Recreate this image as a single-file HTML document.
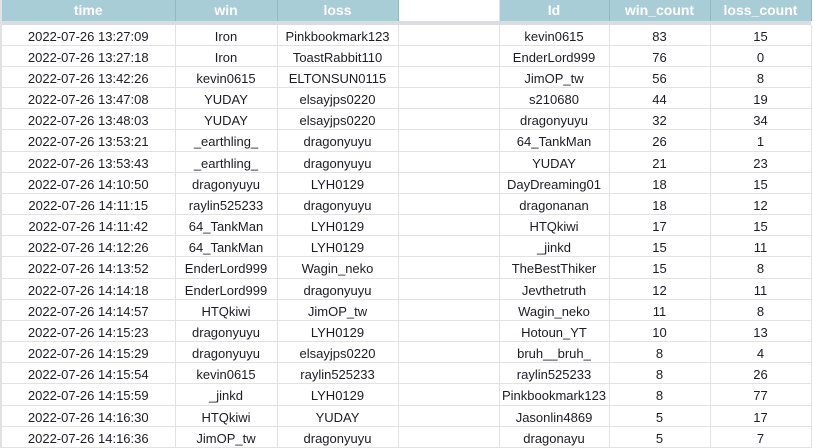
<!DOCTYPE html><html><head><style>
body{margin:0;width:814px;height:448px;overflow:hidden;background:#fff;font-family:"Liberation Sans",Arial,sans-serif}
table{border-collapse:collapse;position:absolute;left:2px;top:0;table-layout:fixed}
td,th{padding:0;text-align:center;white-space:nowrap;overflow:hidden}
th{height:20px;background:#a8cdd6;color:#fff;font-weight:bold;font-size:14px;border-right:1px solid #93b8c2;line-height:21px}
th.e{background:#fff;border-right:1px solid #e2e2e2}
tr.bar td{height:4px;background:#dadce0;border:none;padding:0;line-height:4px}
td{height:17px;padding-top:3px;border-right:1px solid #e2e2e2;border-bottom:1px solid #e2e2e2;font-size:13px;color:#1c1c24;line-height:17px}
tr.r td{height:18px;line-height:18px}
</style></head><body>
<div style="position:absolute;left:0;top:0;width:2px;height:448px;background:#e2e2e2"></div>
<table>
<colgroup><col style="width:173px"><col style="width:102px"><col style="width:121px"><col style="width:101px"><col style="width:110px"><col style="width:101px"><col style="width:101px"></colgroup>
<tr><th>time</th><th>win</th><th>loss</th><th class="e"></th><th>Id</th><th>win_count</th><th>loss_count</th></tr>
<tr class="bar"><td colspan="7"></td></tr>
<tr><td>2022-07-26 13:27:09</td><td>Iron</td><td>Pinkbookmark123</td><td></td><td>kevin0615</td><td>83</td><td>15</td></tr>
<tr><td>2022-07-26 13:27:18</td><td>Iron</td><td>ToastRabbit110</td><td></td><td>EnderLord999</td><td>76</td><td>0</td></tr>
<tr><td>2022-07-26 13:42:26</td><td>kevin0615</td><td>ELTONSUN0115</td><td></td><td>JimOP_tw</td><td>56</td><td>8</td></tr>
<tr><td>2022-07-26 13:47:08</td><td>YUDAY</td><td>elsayjps0220</td><td></td><td>s210680</td><td>44</td><td>19</td></tr>
<tr><td>2022-07-26 13:48:03</td><td>YUDAY</td><td>elsayjps0220</td><td></td><td>dragonyuyu</td><td>32</td><td>34</td></tr>
<tr class="r"><td>2022-07-26 13:53:21</td><td>_earthling_</td><td>dragonyuyu</td><td></td><td>64_TankMan</td><td>26</td><td>1</td></tr>
<tr><td>2022-07-26 13:53:43</td><td>_earthling_</td><td>dragonyuyu</td><td></td><td>YUDAY</td><td>21</td><td>23</td></tr>
<tr><td>2022-07-26 14:10:50</td><td>dragonyuyu</td><td>LYH0129</td><td></td><td>DayDreaming01</td><td>18</td><td>15</td></tr>
<tr><td>2022-07-26 14:11:15</td><td>raylin525233</td><td>dragonyuyu</td><td></td><td>dragonanan</td><td>18</td><td>12</td></tr>
<tr><td>2022-07-26 14:11:42</td><td>64_TankMan</td><td>LYH0129</td><td></td><td>HTQkiwi</td><td>17</td><td>15</td></tr>
<tr><td>2022-07-26 14:12:26</td><td>64_TankMan</td><td>LYH0129</td><td></td><td>_jinkd</td><td>15</td><td>11</td></tr>
<tr class="r"><td>2022-07-26 14:13:52</td><td>EnderLord999</td><td>Wagin_neko</td><td></td><td>TheBestThiker</td><td>15</td><td>8</td></tr>
<tr><td>2022-07-26 14:14:18</td><td>EnderLord999</td><td>dragonyuyu</td><td></td><td>Jevthetruth</td><td>12</td><td>11</td></tr>
<tr><td>2022-07-26 14:14:57</td><td>HTQkiwi</td><td>JimOP_tw</td><td></td><td>Wagin_neko</td><td>11</td><td>8</td></tr>
<tr><td>2022-07-26 14:15:23</td><td>dragonyuyu</td><td>LYH0129</td><td></td><td>Hotoun_YT</td><td>10</td><td>13</td></tr>
<tr><td>2022-07-26 14:15:29</td><td>dragonyuyu</td><td>elsayjps0220</td><td></td><td>bruh__bruh_</td><td>8</td><td>4</td></tr>
<tr><td>2022-07-26 14:15:54</td><td>kevin0615</td><td>raylin525233</td><td></td><td>raylin525233</td><td>8</td><td>26</td></tr>
<tr class="r"><td>2022-07-26 14:15:59</td><td>_jinkd</td><td>LYH0129</td><td></td><td>Pinkbookmark123</td><td>8</td><td>77</td></tr>
<tr><td>2022-07-26 14:16:30</td><td>HTQkiwi</td><td>YUDAY</td><td></td><td>Jasonlin4869</td><td>5</td><td>17</td></tr>
<tr><td>2022-07-26 14:16:36</td><td>JimOP_tw</td><td>dragonyuyu</td><td></td><td>dragonayu</td><td>5</td><td>7</td></tr>
</table>
</body></html>
